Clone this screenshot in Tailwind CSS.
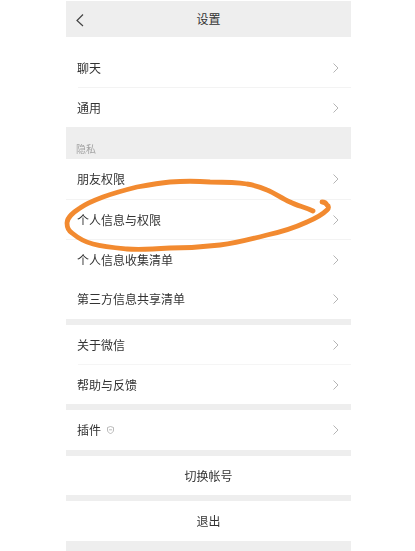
<!DOCTYPE html>
<html lang="zh-CN">
<head>
  <meta charset="UTF-8">
  <meta name="viewport" content="width=device-width, initial-scale=1.0">
  <title>设置</title>
  <script src="https://cdn.jsdelivr.net/npm/@tailwindcss/browser@4"></script>
</head>
<body class="bg-white font-['Noto_Sans_CJK_SC','Noto_Sans',sans-serif]">
  <div class="relative h-[551px] w-[415px] overflow-hidden">
    <div class="ml-[66px] mt-px w-[285px] text-[12px] text-[#333333] blur-[0.4px]">

      <!-- header -->
      <div class="relative flex h-[36px] items-center justify-center bg-[#eeeeee]">
        <svg class="absolute left-[9px] top-[12px]" width="10" height="14" viewBox="0 0 10 14" fill="none" stroke="#444" stroke-width="1.2"><path d="M8 1.5 2 7.5 8 13"/></svg>
        <span>设置</span>
      </div>

      <!-- 聊天 / 通用 -->
      <div class="flex h-[50px] items-center justify-between pt-[11px] pl-[11px] pr-[12px]">
        <span>聊天</span>
        <svg width="6" height="10" viewBox="0 0 6 10" fill="none" stroke="#b5b5b5" stroke-width="1"><path d="M.5.5 5 5 .5 9.5"/></svg>
      </div>
      <div class="ml-[12px] h-px bg-[#f3f3f3]"></div>
      <div class="flex h-[39px] items-center justify-between pl-[11px] pr-[12px]">
        <span>通用</span>
        <svg width="6" height="10" viewBox="0 0 6 10" fill="none" stroke="#b5b5b5" stroke-width="1"><path d="M.5.5 5 5 .5 9.5"/></svg>
      </div>

      <!-- 隐私 -->
      <div class="flex h-[32px] items-end bg-[#eeeeee] pb-[3px] pl-[10px] text-[10px] text-[#a3a3a3]">隐私</div>

      <div class="flex h-[40px] items-center justify-between pl-[11px] pr-[12px]">
        <span>朋友权限</span>
        <svg width="6" height="10" viewBox="0 0 6 10" fill="none" stroke="#b5b5b5" stroke-width="1"><path d="M.5.5 5 5 .5 9.5"/></svg>
      </div>
      <div class="flex h-[40px] items-center justify-between border-t border-[#f3f3f3] pl-[11px] pr-[12px]">
        <span>个人信息与权限</span>
        <svg width="6" height="10" viewBox="0 0 6 10" fill="none" stroke="#b5b5b5" stroke-width="1"><path d="M.5.5 5 5 .5 9.5"/></svg>
      </div>
      <div class="flex h-[40px] items-center justify-between border-t border-[#f3f3f3] pl-[11px] pr-[12px]">
        <span>个人信息收集清单</span>
        <svg width="6" height="10" viewBox="0 0 6 10" fill="none" stroke="#b5b5b5" stroke-width="1"><path d="M.5.5 5 5 .5 9.5"/></svg>
      </div>
      <div class="flex h-[40px] items-center justify-between pl-[11px] pr-[12px]">
        <span>第三方信息共享清单</span>
        <svg width="6" height="10" viewBox="0 0 6 10" fill="none" stroke="#b5b5b5" stroke-width="1"><path d="M.5.5 5 5 .5 9.5"/></svg>
      </div>
      <div class="h-[6px] bg-[#eeeeee]"></div>

      <!-- 关于 / 帮助 -->
      <div class="flex h-[39px] items-center justify-between pl-[11px] pr-[12px]">
        <span>关于微信</span>
        <svg width="6" height="10" viewBox="0 0 6 10" fill="none" stroke="#b5b5b5" stroke-width="1"><path d="M.5.5 5 5 .5 9.5"/></svg>
      </div>
      <div class="ml-[12px] h-px bg-[#f5f5f5]"></div>
      <div class="flex h-[39px] items-center justify-between pl-[11px] pr-[12px]">
        <span>帮助与反馈</span>
        <svg width="6" height="10" viewBox="0 0 6 10" fill="none" stroke="#b5b5b5" stroke-width="1"><path d="M.5.5 5 5 .5 9.5"/></svg>
      </div>
      <div class="h-[6px] bg-[#eeeeee]"></div>

      <!-- 插件 -->
      <div class="flex h-[40px] items-center justify-between pl-[11px] pr-[12px]">
        <span class="flex items-center gap-[6px]">
          插件
          <svg width="7" height="8" viewBox="0 0 7 8" fill="none" stroke="#a8a8a8" stroke-width=".8"><path d="M3.5.5 6.500 1.500V4C6.500 6 5 7 3.500 7.500 2 7 .5 6 .5 4V1.500Z"/><path d="M2 3.800H5"/></svg>
        </span>
        <svg width="6" height="10" viewBox="0 0 6 10" fill="none" stroke="#b5b5b5" stroke-width="1"><path d="M.5.5 5 5 .5 9.5"/></svg>
      </div>
      <div class="h-[6px] bg-[#eeeeee]"></div>

      <div class="flex h-[39px] items-center justify-center">切换帐号</div>
      <div class="h-[6px] bg-[#eeeeee]"></div>
      <div class="flex h-[40px] items-center justify-center">退出</div>
      <div class="h-[10px] bg-[#eeeeee]"></div>
    </div>

    <!-- hand-drawn orange ring over the row -->
    <svg class="absolute inset-0 blur-[0.3px]" width="415" height="551" viewBox="0 0 415 551" fill="none">
      <path d="M313 211C305 207 298 206 290 202C281 198 275 193 267 190C260 187 254 185 247 184C235 182 222 182 210 182C197 181 183 181 170 182C159 183 148 185 137 187C125 190 114 193 103 197C95 200 87 203 80 208C74 212 67 217 67 223C67 228 69 231 72 233C78 238 85 242 93 244C104 247 116 248 127 249C141 250 156 249 170 248C187 248 203 247 220 245C236 243 252 239 267 235C281 232 294 228 307 222C314 219 322 215 327 210C329 208 329 206 327 205C326 203 324 202 322 202" stroke="#f28a30" stroke-width="4.800" stroke-linecap="round" stroke-linejoin="round"/>
    </svg>
  </div>
</body>
</html>
